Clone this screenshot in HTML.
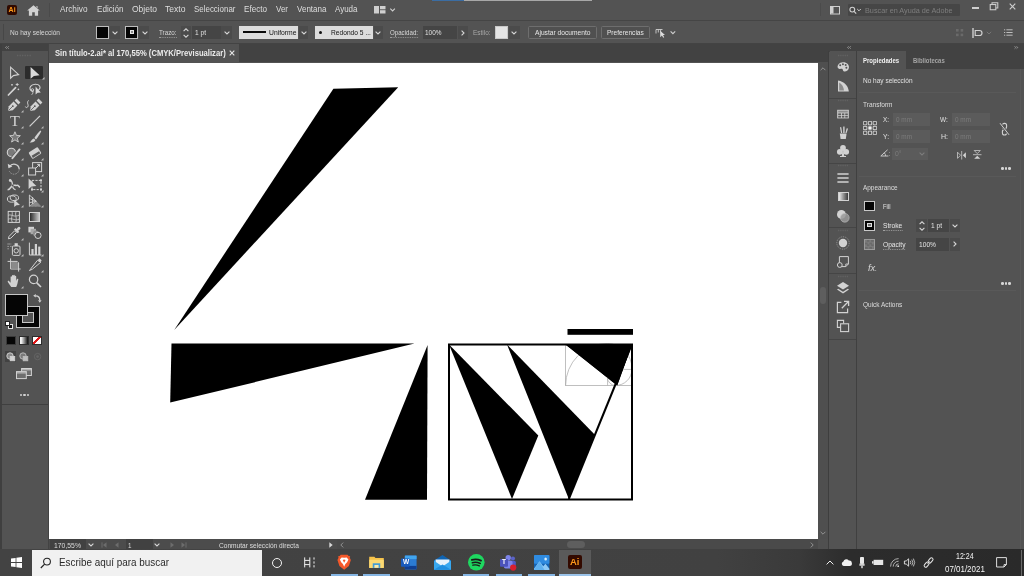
<!DOCTYPE html>
<html lang="es">
<head>
<meta charset="utf-8">
<title>Adobe Illustrator</title>
<style>
*{margin:0;padding:0;box-sizing:border-box}
html,body{width:1024px;height:576px;overflow:hidden;background:#535353}
body{position:relative;font-family:"Liberation Sans",sans-serif;font-size:8px;color:#dcdcdc;line-height:1}
.a{position:absolute}
.t{position:absolute;white-space:nowrap;transform-origin:0 50%}
svg{position:absolute;overflow:visible}
#root{position:absolute;left:0;top:0;width:1024px;height:576px;will-change:transform}
/* backgrounds */
#menubar{left:0;top:0;width:1024px;height:20px;background:#535353}
#ctrlbar{left:0;top:21px;width:1024px;height:22px;background:#535353}
#sep1{left:0;top:20px;width:1024px;height:1px;background:#454545}
#sep2{left:0;top:43px;width:1024px;height:1px;background:#434343}
#tabbar{left:49px;top:44px;width:781px;height:18px;background:#424242}
#doctab{left:49px;top:44px;width:190px;height:18px;background:#535353}
#tbhead{left:0;top:44px;width:48px;height:7px;background:#424242}
#toolbar{left:0;top:51px;width:48px;height:498px;background:#535353}
#tbedge{left:48px;top:44px;width:1px;height:505px;background:#434343}
#canvas{left:49px;top:62.6px;width:769px;height:476.4px;background:#fff}
#vscroll{left:818px;top:62px;width:9.6px;height:477px;background:#4f4f4f}
#status{left:49px;top:539px;width:779px;height:10px;background:#4c4c4c}
#rgap{left:827.6px;top:51px;width:1.8px;height:498px;background:#3e3e3e}
#rhead{left:829px;top:44px;width:195px;height:7px;background:#424242}
#istrip{left:829.4px;top:51.5px;width:26.3px;height:498px;background:#535353}
#rgap2{left:855.7px;top:51px;width:1.5px;height:498px;background:#404040}
#ptabs{left:857px;top:51px;width:167px;height:18px;background:#424242}
#ptab{left:857px;top:51px;width:49px;height:18px;background:#535353}
#panel{left:857px;top:69px;width:167px;height:480px;background:#535353}
#taskbar{left:0;top:549px;width:1024px;height:27px;background:linear-gradient(90deg,#434343 0,#414141 70%,#3a3a3a 78%,#2c2c2c 83%,#2a2a2a 100%)}
</style>
</head>
<body><div id="root">
<div class="a" id="menubar"></div>
<div class="a" id="sep1"></div>
<div class="a" id="ctrlbar"></div>
<div class="a" id="sep2"></div>
<div class="a" id="tabbar"></div>
<div class="a" id="doctab"></div>
<div class="a" id="tbhead"></div>
<div class="a" id="toolbar"></div>
<div class="a" id="tbedge"></div>
<div class="a" id="canvas"></div>
<div class="a" id="vscroll"></div>
<div class="a" id="status"></div>
<div class="a" id="rgap"></div>
<div class="a" id="rhead"></div>
<div class="a" id="istrip"></div>
<div class="a" id="rgap2"></div>
<div class="a" id="ptabs"></div>
<div class="a" id="ptab"></div>
<div class="a" id="panel"></div>

<!-- ARTWORK -->
<svg id="art" class="a" style="left:0;top:0" width="1024" height="576" viewBox="0 0 1024 576">
<g fill="#000">
<polygon points="333.4,88.7 398.2,87.2 174.2,329.9"/>
<polygon points="171.5,343.6 414.5,343.6 170.2,402.6"/>
<polygon points="427.6,345 427,499.8 365,499.8"/>
<rect x="567.5" y="329" width="65.5" height="5.8"/>
<polygon points="449,344.5 538.3,435.5 512,499"/>
<polygon points="507,344.5 594.6,434.6 568.8,499"/>
<polygon points="565.5,344.5 632,344.5 617.2,385.6"/>
</g>
<g fill="none" stroke="#ababab" stroke-width="0.75">
<rect x="565.6" y="344.5" width="66.4" height="41"/>
<line x1="607.6" y1="344.5" x2="607.6" y2="385.5"/>
<line x1="607.6" y1="369.4" x2="632" y2="369.4"/>
<path d="M565.6,385.5 A42,42 0 0 1 607.6,343.5 A25,25 0 0 1 632,369 A16.5,16.5 0 0 1 615.5,385.5 A8.2,8.2 0 0 1 607.4,377.3"/>
</g>
<rect x="449" y="344.5" width="183" height="155" fill="none" stroke="#000" stroke-width="2"/>
<line x1="568.8" y1="499" x2="631.5" y2="345" stroke="#000" stroke-width="2"/>
<g fill="#000">
<polygon points="565.5,344.5 632,344.5 617.2,385.6"/>
</g>
</svg>

<div class="a" style="left:432px;top:0px;width:31.5px;height:1px;background:#3b6da3;"></div>
<div class="a" style="left:463.5px;top:0px;width:128.5px;height:1px;background:#a8a8a8;"></div>
<div class="a" style="left:7px;top:5px;width:10px;height:10px;background:#300a00;border-radius:2px"></div>
<span class="t" style="left:8.60px;top:6.49px;font-size:7px;color:#ff9a1a;transform:scaleX(1.0000);font-weight:bold;">Ai</span>
<svg style="left:27px;top:5px" width="13" height="11" viewBox="0 0 13 11"><path d="M6.5,0.3 L0.2,5.6 H1.9 V10.8 H5.2 V7.2 H7.8 V10.8 H11.1 V5.6 H12.8 Z M9.3,1.2 h1.3 v2 l-1.3,-1.1z" fill="#d2d2d2"/></svg>
<div class="a" style="left:48.5px;top:3px;width:1px;height:14px;background:#4a4a4a;"></div>
<span class="t" style="left:60.00px;top:5.13px;font-size:9px;color:#dedede;transform:scaleX(0.9164);">Archivo</span>
<span class="t" style="left:96.50px;top:5.13px;font-size:9px;color:#dedede;transform:scaleX(0.8978);">Edición</span>
<span class="t" style="left:131.50px;top:5.13px;font-size:9px;color:#dedede;transform:scaleX(0.9428);">Objeto</span>
<span class="t" style="left:164.50px;top:5.13px;font-size:9px;color:#dedede;transform:scaleX(0.9530);">Texto</span>
<span class="t" style="left:193.50px;top:5.13px;font-size:9px;color:#dedede;transform:scaleX(0.8825);">Seleccionar</span>
<span class="t" style="left:243.50px;top:5.13px;font-size:9px;color:#dedede;transform:scaleX(0.9014);">Efecto</span>
<span class="t" style="left:275.50px;top:5.13px;font-size:9px;color:#dedede;transform:scaleX(0.8883);">Ver</span>
<span class="t" style="left:296.50px;top:5.13px;font-size:9px;color:#dedede;transform:scaleX(0.8930);">Ventana</span>
<span class="t" style="left:334.50px;top:5.13px;font-size:9px;color:#dedede;transform:scaleX(0.8873);">Ayuda</span>
<svg style="left:374px;top:6px" width="24" height="8" viewBox="0 0 24 8"><g fill="#cfcfcf"><rect x="0" y="0" width="5" height="7.5"/><rect x="6" y="0" width="5.5" height="3.3"/><rect x="6" y="4.2" width="5.5" height="3.3"/></g><path d="M16.3,2.6 l2.3,2.3 l2.3,-2.3" fill="none" stroke="#cfcfcf" stroke-width="1.1"/></svg>
<svg style="left:830px;top:6px" width="10" height="9" viewBox="0 0 10 9"><rect x="0.5" y="0.5" width="9" height="7.5" fill="none" stroke="#cfcfcf" stroke-width="1"/><rect x="1" y="1" width="2.5" height="6.5" fill="#cfcfcf"/></svg>
<div class="a" style="left:847.5px;top:4px;width:112px;height:12px;background:#464646;border-radius:1px"></div>
<svg style="left:849px;top:6px" width="14" height="9" viewBox="0 0 14 9"><circle cx="3.3" cy="3.6" r="2.4" fill="none" stroke="#d0d0d0" stroke-width="1.1"/><path d="M5.1,5.4 L7.2,7.6" stroke="#d0d0d0" stroke-width="1.2"/><path d="M8.2,3 l1.8,1.8 l1.8,-1.8" fill="none" stroke="#d0d0d0" stroke-width="1"/></svg>
<span class="t" style="left:864.50px;top:6.62px;font-size:7.5px;color:#7e7e7e;transform:scaleX(0.9685);">Buscar en Ayuda de Adobe</span>
<div class="a" style="left:820px;top:3px;width:1px;height:13px;background:#4b4b4b;"></div>
<div class="a" style="left:972px;top:7.2px;width:7.4px;height:1.6px;background:#cfcfcf;"></div>
<svg style="left:989.2px;top:2.2px" width="10" height="9" viewBox="0 0 10 10"><path d="M2.8,2.6 V0.8 H9.2 V6.6 H7.2" fill="none" stroke="#cdcdcd" stroke-width="1.2"/><rect x="0.8" y="2.8" width="6.2" height="5.8" fill="none" stroke="#cdcdcd" stroke-width="1.2"/></svg>
<svg style="left:1009px;top:3px" width="7" height="7" viewBox="0 0 8 8"><path d="M0.8,0.8 L7.2,7.2 M7.2,0.8 L0.8,7.2" stroke="#cdcdcd" stroke-width="1.3"/></svg>

<div class="a" style="left:3px;top:24px;width:1px;height:16px;background:#474747;"></div>
<span class="t" style="left:10.00px;top:29.29px;font-size:7px;color:#d8d8d8;transform:scaleX(0.9380);">No hay selección</span>
<div class="a" style="left:96px;top:26px;width:13px;height:12.5px;background:#050505;border:1px solid #bdbdbd"></div>
<div class="a" style="left:110px;top:26px;width:10px;height:12.5px;background:#4b4b4b;"></div>
<svg style="left:112px;top:30.5px" width="6" height="4" viewBox="0 0 6 4"><path d="M0.6,0.6 L3,3 L5.4,0.6" fill="none" stroke="#d6d6d6" stroke-width="1.1"/></svg>
<div class="a" style="left:125px;top:26px;width:13px;height:12.5px;background:#050505;border:1px solid #bdbdbd"></div>
<div class="a" style="left:129.5px;top:30.2px;width:4px;height:4px;background:#8a8a8a;border:1px solid #e8e8e8"></div>
<div class="a" style="left:139px;top:26px;width:10px;height:12.5px;background:#4b4b4b;"></div>
<svg style="left:141.5px;top:30.5px" width="6" height="4" viewBox="0 0 6 4"><path d="M0.6,0.6 L3,3 L5.4,0.6" fill="none" stroke="#d6d6d6" stroke-width="1.1"/></svg>
<span class="t" style="left:158.50px;top:29.29px;font-size:7px;color:#d8d8d8;transform:scaleX(0.8939);border-bottom:1px dotted #9a9a9a;padding-bottom:0.5px;">Trazo:</span>
<div class="a" style="left:181px;top:26px;width:10px;height:12.5px;background:#4b4b4b;"></div>
<svg style="left:183px;top:27.5px" width="6" height="10" viewBox="0 0 6 10"><path d="M0.6,3.2 L3,0.8 L5.4,3.2 M0.6,6.8 L3,9.2 L5.4,6.8" fill="none" stroke="#d6d6d6" stroke-width="1.1"/></svg>
<div class="a" style="left:192px;top:26px;width:28.5px;height:12.5px;background:#454545;"></div>
<span class="t" style="left:195.00px;top:29.29px;font-size:7px;color:#e0e0e0;transform:scaleX(0.9422);">1 pt</span>
<div class="a" style="left:221px;top:26px;width:11px;height:12.5px;background:#4b4b4b;"></div>
<svg style="left:224px;top:30.5px" width="6" height="4" viewBox="0 0 6 4"><path d="M0.6,0.6 L3,3 L5.4,0.6" fill="none" stroke="#d6d6d6" stroke-width="1.1"/></svg>
<div class="a" style="left:238.5px;top:26px;width:59.5px;height:12.5px;background:#dcdcdc;"></div>
<div class="a" style="left:242.5px;top:31.3px;width:23px;height:2px;background:#0a0a0a;"></div>
<span class="t" style="left:268.50px;top:29.08px;font-size:7.4px;color:#111;transform:scaleX(0.9161);">Uniforme</span>
<div class="a" style="left:299px;top:26px;width:9px;height:12.5px;background:#4b4b4b;"></div>
<svg style="left:300.5px;top:30.5px" width="6" height="4" viewBox="0 0 6 4"><path d="M0.6,0.6 L3,3 L5.4,0.6" fill="none" stroke="#d6d6d6" stroke-width="1.1"/></svg>
<div class="a" style="left:314.5px;top:26px;width:58px;height:12.5px;background:#dcdcdc;"></div>
<div class="a" style="left:319px;top:31px;width:3px;height:3px;border-radius:50%;background:#111"></div>
<span class="t" style="left:331.00px;top:29.08px;font-size:7.4px;color:#111;transform:scaleX(0.9002);">Redondo 5 ...</span>
<div class="a" style="left:373.5px;top:26px;width:9px;height:12.5px;background:#4b4b4b;"></div>
<svg style="left:375px;top:30.5px" width="6" height="4" viewBox="0 0 6 4"><path d="M0.6,0.6 L3,3 L5.4,0.6" fill="none" stroke="#d6d6d6" stroke-width="1.1"/></svg>
<span class="t" style="left:390.00px;top:29.29px;font-size:7px;color:#d8d8d8;transform:scaleX(0.8775);border-bottom:1px dotted #9a9a9a;padding-bottom:0.5px;">Opacidad:</span>
<div class="a" style="left:422.5px;top:26px;width:34px;height:12.5px;background:#454545;"></div>
<span class="t" style="left:425.00px;top:29.29px;font-size:7px;color:#e0e0e0;transform:scaleX(0.9216);">100%</span>
<div class="a" style="left:457.5px;top:26px;width:10.5px;height:12.5px;background:#4b4b4b;"></div>
<svg style="left:460.6px;top:29.5px" width="4" height="6" viewBox="0 0 4 6"><path d="M0.6,0.6 L3,3 L0.6,5.4" fill="none" stroke="#d6d6d6" stroke-width="1.1"/></svg>
<span class="t" style="left:472.50px;top:29.29px;font-size:7px;color:#a8a8a8;transform:scaleX(0.9181);">Estilo:</span>
<div class="a" style="left:495px;top:26px;width:12.5px;height:12.5px;background:#e4e4e4;border:1px solid #c8c8c8"></div>
<div class="a" style="left:508.5px;top:26px;width:11px;height:12.5px;background:#4b4b4b;"></div>
<svg style="left:511px;top:30.5px" width="6" height="4" viewBox="0 0 6 4"><path d="M0.6,0.6 L3,3 L5.4,0.6" fill="none" stroke="#d6d6d6" stroke-width="1.1"/></svg>
<div class="a" style="left:528px;top:26px;width:68.5px;height:12.5px;border:1px solid #6e6e6e;border-radius:1.5px;background:#505050"></div>
<span class="t" style="left:535.00px;top:29.28px;font-size:7.4px;color:#e6e6e6;transform:scaleX(0.8995);">Ajustar documento</span>
<div class="a" style="left:600.8px;top:26px;width:49.5px;height:12.5px;border:1px solid #6e6e6e;border-radius:1.5px;background:#505050"></div>
<span class="t" style="left:607.00px;top:29.28px;font-size:7.4px;color:#e6e6e6;transform:scaleX(0.8858);">Preferencias</span>
<svg style="left:655px;top:27px" width="22" height="11" viewBox="0 0 22 11"><g fill="none" stroke="#cfcfcf" stroke-width="0.9"><path d="M1,2.5 H7.5 M1,2.5 V6.5 M3.3,2.5 V5.5 M5.6,2.5 V5.5"/></g><path d="M5.2,3.8 L5.2,10.2 L6.9,8.6 L8.2,10.8 L9.2,10.2 L8,8.1 L10,7.9 Z" fill="#dcdcdc"/><path d="M15.6,4.3 l2.3,2.3 l2.3,-2.3" fill="none" stroke="#cfcfcf" stroke-width="1.1"/></svg>
<svg style="left:956px;top:28.5px" width="8" height="8" viewBox="0 0 8 8"><g fill="#6a6a6a"><rect x="0" y="0" width="2.6" height="2.6"/><rect x="4.6" y="0" width="2.6" height="2.6"/><rect x="0" y="4.6" width="2.6" height="2.6"/><rect x="4.6" y="4.6" width="2.6" height="2.6"/></g></svg>
<svg style="left:972px;top:27.5px" width="22" height="10" viewBox="0 0 22 10"><path d="M1,0 V10" stroke="#cfcfcf" stroke-width="1.4"/><path d="M3.2,2.5 H7.5 A2.3,2.3 0 0 1 7.5,7.5 H3.2 Z" fill="none" stroke="#cfcfcf" stroke-width="1.2"/><path d="M14.8,3.8 l2.2,2.2 l2.2,-2.2" fill="none" stroke="#767676" stroke-width="1"/></svg>
<svg style="left:1004px;top:29px" width="9" height="7" viewBox="0 0 9 7"><path d="M0,0.8 H1.2 M2.4,0.8 H8.6 M0,3.5 H1.2 M2.4,3.5 H8.6 M0,6.2 H1.2 M2.4,6.2 H8.6" stroke="#bdbdbd" stroke-width="1"/></svg>

<span class="t" style="left:55.40px;top:49.04px;font-size:8.6px;color:#ececec;transform:scaleX(0.8890);font-weight:bold;">Sin título-2.ai* al 170,55% (CMYK/Previsualizar)</span>
<svg style="left:229px;top:49.5px" width="6" height="6" viewBox="0 0 6 6"><path d="M0.7,0.7 L5.3,5.3 M5.3,0.7 L0.7,5.3" stroke="#e6e6e6" stroke-width="1.1"/></svg>
<svg style="left:4.6px;top:46px" width="4.5" height="3" viewBox="0 0 6 4"><path d="M2.4,0.4 L0.8,2 L2.4,3.6 M5,0.4 L3.4,2 L5,3.6" fill="none" stroke="#c8c8c8" stroke-width="0.8"/></svg>
<svg style="left:846.8px;top:46px" width="4.5" height="3" viewBox="0 0 6 4"><path d="M2.4,0.4 L0.8,2 L2.4,3.6 M5,0.4 L3.4,2 L5,3.6" fill="none" stroke="#c8c8c8" stroke-width="0.8"/></svg>
<svg style="left:1013.8px;top:46px" width="4.5" height="3" viewBox="0 0 6 4"><path d="M0.8,0.4 L2.4,2 L0.8,3.6 M3.4,0.4 L5,2 L3.4,3.6" fill="none" stroke="#c8c8c8" stroke-width="0.8"/></svg>

<div class="a" style="left:0px;top:44px;width:1.5px;height:505px;background:#3f3f3f;"></div>
<svg style="left:17px;top:54px" width="14" height="3" viewBox="0 0 14 3"><path d="M0,1.5 H14" stroke="#626262" stroke-width="1.4" stroke-dasharray="1.4 1.1"/></svg>
<div class="a" style="left:25px;top:66px;width:18px;height:13.4px;background:#2c2c2c;border-radius:1px;"></div>
<svg style="left:6.4px;top:65.0px" width="16" height="16" viewBox="0 0 16 16"><path d="M4.6,2.2 L4.6,13.2 L7.4,10.6 L12.6,9.6 Z" fill="none" stroke="#d2d2d2" stroke-width="1.1" stroke-linejoin="miter"/></svg>
<svg style="left:26.7px;top:65.0px" width="16" height="16" viewBox="0 0 16 16"><path d="M3.6,2 L3.6,13.8 L6.9,10.9 L12.6,10.2 Z" fill="#dadada"/></svg>
<svg style="left:41.9px;top:77.1px" width="2.5" height="2.5" viewBox="0 0 3 3"><path d="M3,0 V3 H0Z" fill="#bcbcbc"/></svg>
<svg style="left:6.4px;top:81.0px" width="16" height="16" viewBox="0 0 16 16"><path d="M2.4,14 L9.6,6.6" stroke="#d2d2d2" stroke-width="1.7" stroke-linecap="round"/><path d="M11.2,2 V5 M9.7,3.5 H12.7 M6,3 V4.6 M5.2,3.8 H6.8 M12.4,7.6 V9.2 M11.6,8.4 H13.2" stroke="#d2d2d2" stroke-width="0.9"/></svg>
<svg style="left:26.7px;top:81.0px" width="16" height="16" viewBox="0 0 16 16"><path d="M6.4,10.4 C3,10 2.2,7.4 3.6,5.4 C5.4,2.8 11,2.6 12.6,5 C13.6,6.6 12.8,8.2 11.4,9" fill="none" stroke="#d2d2d2" stroke-width="1.1"/><circle cx="5.4" cy="9" r="1.3" fill="none" stroke="#d2d2d2" stroke-width="0.9"/><path d="M5.6,10.2 C6.4,11.6 5.6,13 4.6,13.8" fill="none" stroke="#d2d2d2" stroke-width="0.9"/><path d="M8.6,5.6 L8.6,13.6 L10.6,11.8 L13.8,11.6 Z" fill="#dadada"/></svg>
<svg style="left:6.4px;top:97.2px" width="16" height="16" viewBox="0 0 16 16"><path d="M2,14 L2.8,9.2 L7.6,4.6 L11.4,8.4 L6.8,13.2 Z" fill="#d2d2d2"/><path d="M8.6,3.6 L10.6,1.6 L14.4,5.4 L12.4,7.4 Z" fill="#d2d2d2"/><path d="M2.4,13.6 L6.4,9.6" stroke="#535353" stroke-width="0.8"/><circle cx="6.8" cy="9.2" r="0.9" fill="#535353"/></svg>
<svg style="left:20.6px;top:109.8px" width="2.5" height="2.5" viewBox="0 0 3 3"><path d="M3,0 V3 H0Z" fill="#bcbcbc"/></svg>
<svg style="left:28.3px;top:97.2px" width="16" height="16" viewBox="0 0 16 16"><path d="M2,14 L2.8,9.2 L7.6,4.6 L11.4,8.4 L6.8,13.2 Z" fill="#d2d2d2"/><path d="M8.6,3.6 L10.6,1.6 L14.4,5.4 L12.4,7.4 Z" fill="#d2d2d2"/><path d="M2.4,13.6 L6.4,9.6" stroke="#535353" stroke-width="0.8"/><circle cx="6.8" cy="9.2" r="0.9" fill="#535353"/></svg>
<svg style="left:22.2px;top:97.2px" width="16" height="16" viewBox="0 0 16 16"><path d="M6.6,3.4 C4,6 7.4,8 5.6,10 C4.8,11 3.6,10.6 3.4,9.6" fill="none" stroke="#d2d2d2" stroke-width="1"/></svg>
<span class="t" style="left:9.60px;top:113.80px;font-size:15px;color:#d2d2d2;transform:scaleX(1.0696);font-family:'Liberation Serif',serif;">T</span>
<svg style="left:20.6px;top:125.6px" width="2.5" height="2.5" viewBox="0 0 3 3"><path d="M3,0 V3 H0Z" fill="#bcbcbc"/></svg>
<svg style="left:26.7px;top:113.0px" width="16" height="16" viewBox="0 0 16 16"><path d="M2.6,13.4 L13,2.8" stroke="#d2d2d2" stroke-width="1.2"/></svg>
<svg style="left:40.9px;top:125.6px" width="2.5" height="2.5" viewBox="0 0 3 3"><path d="M3,0 V3 H0Z" fill="#bcbcbc"/></svg>
<svg style="left:6.6px;top:129.0px" width="16" height="16" viewBox="0 0 16 16"><path transform="translate(1,1.2) scale(0.87)" d="M8,1.8 L9.7,6 L14.2,6.3 L10.7,9.2 L11.9,13.6 L8,11.1 L4.1,13.6 L5.3,9.2 L1.8,6.3 L6.3,6 Z" fill="#7a7a7a" stroke="#d2d2d2" stroke-width="1"/></svg>
<svg style="left:20.6px;top:141.6px" width="2.5" height="2.5" viewBox="0 0 3 3"><path d="M3,0 V3 H0Z" fill="#bcbcbc"/></svg>
<svg style="left:26.7px;top:129.0px" width="16" height="16" viewBox="0 0 16 16"><path d="M13.6,1.6 C12,2.6 8.6,7 7.4,9 L9,10.4 C10.6,8.6 13.6,4 14.2,2.2 Z" fill="#d2d2d2"/><path d="M6.8,9.6 L8.4,11 C7.8,13 5.4,13.8 2.6,13.4 C4.4,12.6 4.6,10 6.8,9.6Z" fill="#d2d2d2"/></svg>
<svg style="left:40.9px;top:141.6px" width="2.5" height="2.5" viewBox="0 0 3 3"><path d="M3,0 V3 H0Z" fill="#bcbcbc"/></svg>
<svg style="left:5.4px;top:145.0px" width="16" height="16" viewBox="0 0 16 16"><circle cx="6.4" cy="7.4" r="4.1" fill="#7a7a7a" stroke="#d2d2d2" stroke-width="1.1"/><path d="M7.4,13.2 L14.6,4.4" stroke="#535353" stroke-width="3.4"/><path d="M7.4,13.2 L14.6,4.4" stroke="#d2d2d2" stroke-width="1.9" stroke-linecap="round"/></svg>
<svg style="left:20.6px;top:157.6px" width="2.5" height="2.5" viewBox="0 0 3 3"><path d="M3,0 V3 H0Z" fill="#bcbcbc"/></svg>
<svg style="left:26.7px;top:145.0px" width="16" height="16" viewBox="0 0 16 16"><g transform="rotate(-32 8 8)"><rect x="2.6" y="4.2" width="10.8" height="7.6" rx="1.2" fill="#d2d2d2"/><rect x="3.6" y="8.6" width="8.8" height="2.4" fill="#5a5a5a"/></g></svg>
<svg style="left:40.9px;top:157.6px" width="2.5" height="2.5" viewBox="0 0 3 3"><path d="M3,0 V3 H0Z" fill="#bcbcbc"/></svg>
<svg style="left:6.4px;top:161.4px" width="16" height="16" viewBox="0 0 16 16"><path d="M3.6,5.6 A5.2,5.2 0 0 1 13.2,8" fill="none" stroke="#d2d2d2" stroke-width="1.2"/><path d="M13.2,8 A5.2,5.2 0 0 1 3.2,10" fill="none" stroke="#9a9a9a" stroke-width="1" stroke-dasharray="1.5 1.1"/><path d="M1.8,2.8 L2.4,7.2 L6.4,5.6 Z" fill="#d2d2d2"/></svg>
<svg style="left:20.6px;top:174.0px" width="2.5" height="2.5" viewBox="0 0 3 3"><path d="M3,0 V3 H0Z" fill="#bcbcbc"/></svg>
<svg style="left:26.7px;top:161.4px" width="16" height="16" viewBox="0 0 16 16"><rect x="5.6" y="1.6" width="9" height="9" fill="none" stroke="#d2d2d2" stroke-width="1"/><rect x="1.6" y="7" width="7" height="7" fill="#535353" stroke="#d2d2d2" stroke-width="1"/><path d="M9,7 L12.6,3.4 M10.2,3.4 H12.6 V5.8" fill="none" stroke="#d2d2d2" stroke-width="1"/></svg>
<svg style="left:40.9px;top:174.0px" width="2.5" height="2.5" viewBox="0 0 3 3"><path d="M3,0 V3 H0Z" fill="#bcbcbc"/></svg>
<svg style="left:6.4px;top:177.0px" width="16" height="16" viewBox="0 0 16 16"><path d="M1.6,12.8 C4,12.6 4.6,10 6.4,8.6 C8,7.4 9.4,8.8 10.8,8.4 C12.4,7.8 12.6,9.6 14,10.2" fill="none" stroke="#d2d2d2" stroke-width="1.5"/><path d="M3.2,3.6 C5.6,3 6.6,5.4 6.4,8.4 M6.6,8.6 C6.4,10.8 8,12.6 9.6,12.6" fill="none" stroke="#d2d2d2" stroke-width="1.3"/><circle cx="4.2" cy="3.4" r="1.3" fill="#d2d2d2"/><circle cx="6.6" cy="8.6" r="1" fill="#535353"/></svg>
<svg style="left:20.6px;top:189.6px" width="2.5" height="2.5" viewBox="0 0 3 3"><path d="M3,0 V3 H0Z" fill="#bcbcbc"/></svg>
<svg style="left:26.7px;top:177.0px" width="16" height="16" viewBox="0 0 16 16"><rect x="5" y="3.4" width="9" height="9.2" fill="none" stroke="#d2d2d2" stroke-width="1" stroke-dasharray="2.2 1.2"/><path d="M1.6,1.4 L1.6,12 L4.6,9.4 L9.4,9 Z" fill="#d2d2d2"/><rect x="13" y="2.4" width="2" height="2" fill="#d2d2d2"/><rect x="13" y="11.6" width="2" height="2" fill="#d2d2d2"/><rect x="4" y="11.6" width="2" height="2" fill="#d2d2d2"/></svg>
<svg style="left:40.9px;top:189.6px" width="2.5" height="2.5" viewBox="0 0 3 3"><path d="M3,0 V3 H0Z" fill="#bcbcbc"/></svg>
<svg style="left:6.4px;top:192.8px" width="16" height="16" viewBox="0 0 16 16"><ellipse cx="5.8" cy="6" rx="4.4" ry="3.2" fill="none" stroke="#d2d2d2" stroke-width="1"/><ellipse cx="8.4" cy="4.8" rx="4.2" ry="2.8" fill="none" stroke="#d2d2d2" stroke-width="1"/><path d="M8.2,6.4 L8.2,14 L10.4,12.2 L14,12 Z" fill="#d2d2d2"/></svg>
<svg style="left:20.6px;top:205.4px" width="2.5" height="2.5" viewBox="0 0 3 3"><path d="M3,0 V3 H0Z" fill="#bcbcbc"/></svg>
<svg style="left:26.7px;top:192.8px" width="16" height="16" viewBox="0 0 16 16"><path d="M2.4,2 V13.4 L9.4,8.4 Z M2.4,5.6 L9.4,8.4 M2.4,9.6 L9.4,8.4 M5.6,4 V11" fill="none" stroke="#d2d2d2" stroke-width="0.9"/><path d="M2.4,13.4 H14 L9.4,8.4" fill="#8a8a8a" stroke="#9a9a9a" stroke-width="0.6" stroke-dasharray="0.8 0.6"/></svg>
<svg style="left:40.9px;top:205.4px" width="2.5" height="2.5" viewBox="0 0 3 3"><path d="M3,0 V3 H0Z" fill="#bcbcbc"/></svg>
<svg style="left:6.4px;top:209.0px" width="16" height="16" viewBox="0 0 16 16"><rect x="2.2" y="2.4" width="11.2" height="11" fill="none" stroke="#d2d2d2" stroke-width="1"/><path d="M2.2,6.4 C5,4.6 8,9 13.4,6 M2.2,10.2 C6,8.6 9,12.4 13.4,10 M5.8,2.4 C7.6,5.6 4,9 6.4,13.4 M10,2.4 C8.4,6 11.6,9.6 9.8,13.4" fill="none" stroke="#d2d2d2" stroke-width="0.8"/></svg>
<div class="a" style="left:29.1px;top:211.8px;width:11.4px;height:10.6px;border:1px solid #d2d2d2;background:linear-gradient(90deg,#2a2a2a,#c8c8c8)"></div>
<svg style="left:6.4px;top:225.0px" width="16" height="16" viewBox="0 0 16 16"><path d="M2.4,13.8 L3,11.4 L8.6,5.8 L10.4,7.6 L4.8,13.2 Z" fill="none" stroke="#d2d2d2" stroke-width="1"/><path d="M8,4.4 L9.4,3 L10.4,4 L12,2.2 A1.3,1.3 0 0 1 14,4.2 L12.2,5.8 L13.2,6.8 L11.8,8.2 Z" fill="#d2d2d2"/></svg>
<svg style="left:20.6px;top:237.6px" width="2.5" height="2.5" viewBox="0 0 3 3"><path d="M3,0 V3 H0Z" fill="#bcbcbc"/></svg>
<svg style="left:26.7px;top:225.0px" width="16" height="16" viewBox="0 0 16 16"><rect x="1.4" y="1.8" width="5.6" height="5.6" fill="#d2d2d2"/><rect x="3.6" y="3.8" width="5.4" height="5.4" fill="#a8a8a8"/><circle cx="9" cy="8.6" r="3" fill="#8e8e8e"/><circle cx="11" cy="10.4" r="3.1" fill="#535353" stroke="#d2d2d2" stroke-width="1"/></svg>
<svg style="left:6.4px;top:241.0px" width="16" height="16" viewBox="0 0 16 16"><rect x="6.4" y="5" width="7.6" height="9.4" rx="1" fill="none" stroke="#d2d2d2" stroke-width="1"/><rect x="8.6" y="2.2" width="3.2" height="2.8" fill="#d2d2d2"/><circle cx="10.2" cy="9.8" r="2.2" fill="none" stroke="#d2d2d2" stroke-width="1"/><path d="M1.6,3 H5.4 M1.6,5.4 H3.2 M4.4,5.4 H5.4 M1.6,7.8 H2.6" stroke="#d2d2d2" stroke-width="0.9" stroke-dasharray="1 0.8"/></svg>
<svg style="left:20.6px;top:253.6px" width="2.5" height="2.5" viewBox="0 0 3 3"><path d="M3,0 V3 H0Z" fill="#bcbcbc"/></svg>
<svg style="left:26.7px;top:241.0px" width="16" height="16" viewBox="0 0 16 16"><path d="M2.4,1.6 V14 H14.4" fill="none" stroke="#d2d2d2" stroke-width="1"/><rect x="4.4" y="8" width="2.2" height="6" fill="#d2d2d2"/><rect x="7.8" y="3" width="2.2" height="11" fill="#d2d2d2"/><rect x="11.2" y="5.6" width="2.2" height="8.4" fill="#d2d2d2"/></svg>
<svg style="left:40.9px;top:253.6px" width="2.5" height="2.5" viewBox="0 0 3 3"><path d="M3,0 V3 H0Z" fill="#bcbcbc"/></svg>
<svg style="left:6.4px;top:257.0px" width="16" height="16" viewBox="0 0 16 16"><path d="M4.6,1.4 V12 H14.6 M1.6,4.4 H11.2 L12.6,5.8 V14.6" fill="none" stroke="#d2d2d2" stroke-width="1"/><path d="M5.2,5 H11 L12,6 V11.4 H5.2Z" fill="#8a8a8a"/></svg>
<svg style="left:26.7px;top:257.0px" width="16" height="16" viewBox="0 0 16 16"><path d="M2.4,13.6 L10.4,3.4 L13.8,5.2 L5.4,12.2 Z" fill="none" stroke="#d2d2d2" stroke-width="1"/><path d="M10.6,3.2 L12.4,1.2 L14.6,3.2 L13.8,5 Z" fill="#d2d2d2"/></svg>
<svg style="left:40.9px;top:269.6px" width="2.5" height="2.5" viewBox="0 0 3 3"><path d="M3,0 V3 H0Z" fill="#bcbcbc"/></svg>
<svg style="left:6.4px;top:273.0px" width="16" height="16" viewBox="0 0 16 16"><path d="M5.2,14 C4.2,12.4 2.8,10.6 1.8,9 C1.4,8.2 2.4,7.4 3.2,8.2 L4.6,9.8 V4 C4.6,3 6,3 6,4 V7.4 V2.8 C6,1.8 7.4,1.8 7.4,2.8 V7.4 V2.4 C7.4,1.4 8.8,1.4 8.8,2.4 V7.6 V3.4 C8.800,2.4 10.2,2.4 10.2,3.4 V8 L10.8,6.4 C11.2,5.4 12.6,5.8 12.2,7 C11.800,8.800 11.4,12 10.2,14 Z" fill="#d2d2d2"/></svg>
<svg style="left:20.6px;top:285.6px" width="2.5" height="2.5" viewBox="0 0 3 3"><path d="M3,0 V3 H0Z" fill="#bcbcbc"/></svg>
<svg style="left:26.7px;top:273.0px" width="16" height="16" viewBox="0 0 16 16"><circle cx="6.6" cy="6.4" r="4.2" fill="none" stroke="#d2d2d2" stroke-width="1.2"/><path d="M9.6,9.600 L14,14" stroke="#d2d2d2" stroke-width="1.6"/></svg>
<div class="a" style="left:16.4px;top:306px;width:23.4px;height:22.4px;background:#050505;border:1px solid #c6c6c6"></div>
<div class="a" style="left:22px;top:312px;width:12px;height:11.4px;background:#535353;border:1px solid #c6c6c6"></div>
<div class="a" style="left:5.1px;top:293.9px;width:22.7px;height:22.6px;background:#050505;border:1px solid #c6c6c6"></div>
<svg style="left:33px;top:294px" width="9" height="9" viewBox="0 0 9 9"><path d="M2.600,1.800 C5.4,1.800 6.800,3.400 6.800,6.2" fill="none" stroke="#d2d2d2" stroke-width="1.3"/><path d="M0.2,1.800 L2.800,0 V3.600Z M6.800,8.800 L5,6.200 H8.600Z" fill="#d2d2d2"/></svg>
<div class="a" style="left:7.600px;top:323.8px;width:5px;height:5px;background:#111;border:0.8px solid #e4e4e4"></div>
<div class="a" style="left:5px;top:321.2px;width:5px;height:5px;background:#fff;border:0.8px solid #222"></div>
<div class="a" style="left:5.5px;top:335.6px;width:10.2px;height:9.6px;background:#060606;border:1px solid #3a3a3a"></div>
<div class="a" style="left:19px;top:335.6px;width:9.6px;height:9.6px;border:1px solid #2c2c2c;background:linear-gradient(90deg,#f4f4f4 15%,#1a1a1a 95%)"></div>
<div class="a" style="left:32.3px;top:335.6px;width:9.6px;height:9.6px;border:1px solid #2c2c2c;background:linear-gradient(135deg,#fff 0,#fff 40%,#e01818 40%,#e01818 60%,#fff 60%)"></div>
<div class="a" style="left:5.2px;top:351.4px;width:11px;height:10.6px;background:#424242;"></div>
<svg style="left:6px;top:352.4px" width="10" height="10" viewBox="0 0 10 10"><circle cx="4" cy="4" r="3.2" fill="#8a8a8a" stroke="#d2d2d2" stroke-width="0.9"/><rect x="4.2" y="4.400" width="4.6" height="4.400" fill="#d2d2d2" stroke="#d2d2d2" stroke-width="0.8"/></svg>
<svg style="left:19.4px;top:352.4px" width="10" height="10" viewBox="0 0 10 10"><circle cx="4" cy="4" r="3.2" fill="#7a7a7a" stroke="#bdbdbd" stroke-width="0.9"/><rect x="4.2" y="4.400" width="4.6" height="4.400" fill="#bdbdbd" stroke="#bdbdbd" stroke-width="0.8"/></svg>
<svg style="left:32.6px;top:352.4px" width="10" height="10" viewBox="0 0 10 10"><circle cx="4.6" cy="4.6" r="3.2" fill="none" stroke="#656565" stroke-width="0.9"/><circle cx="4.6" cy="4.6" r="1.4" fill="#656565"/></svg>
<svg style="left:16px;top:368px" width="16" height="11" viewBox="0 0 16 11"><rect x="5.6" y="0.5" width="9.8" height="7" fill="#6e6e6e" stroke="#d2d2d2" stroke-width="1"/><path d="M5.6,1.800 H15.4" stroke="#d2d2d2" stroke-width="1"/><rect x="0.5" y="3.600" width="9.800" height="7" fill="#6e6e6e" stroke="#d2d2d2" stroke-width="1"/><path d="M0.5,4.900 H10.3" stroke="#d2d2d2" stroke-width="1"/></svg>
<div class="a" style="left:19.6px;top:393.800px;width:2.4px;height:2.400px;border-radius:50%;background:#d2d2d2"></div>
<div class="a" style="left:23.2px;top:393.800px;width:2.4px;height:2.400px;border-radius:50%;background:#d2d2d2"></div>
<div class="a" style="left:26.8px;top:393.800px;width:2.4px;height:2.400px;border-radius:50%;background:#d2d2d2"></div>
<div class="a" style="left:1.5px;top:404px;width:46.5px;height:1px;background:#3f3f3f;"></div>

<div class="a" style="left:49.5px;top:539px;width:36px;height:10px;background:#414141;"></div>
<span class="t" style="left:54.00px;top:542.28px;font-size:7.2px;color:#dcdcdc;transform:scaleX(0.9498);">170,55%</span>
<svg style="left:87.5px;top:543px" width="6" height="4" viewBox="0 0 6 4"><path d="M0.6,0.6 L3,3 L5.4,0.6" fill="none" stroke="#d6d6d6" stroke-width="1.1"/></svg>
<svg style="left:101px;top:541.5px" width="20" height="6" viewBox="0 0 20 6"><g fill="#6c6c6c"><rect x="0.5" y="0.3" width="1" height="5.4"/><path d="M5.5,0.3 L2,3 L5.5,5.7Z"/><path d="M17.5,0.3 L14,3 L17.5,5.7Z"/></g></svg>
<div class="a" style="left:125.5px;top:539px;width:27px;height:10px;background:#414141;"></div>
<span class="t" style="left:127.50px;top:542.28px;font-size:7.2px;color:#dcdcdc;transform:scaleX(0.8740);">1</span>
<svg style="left:154px;top:543px" width="6" height="4" viewBox="0 0 6 4"><path d="M0.6,0.6 L3,3 L5.4,0.6" fill="none" stroke="#d6d6d6" stroke-width="1.1"/></svg>
<svg style="left:169px;top:541.5px" width="20" height="6" viewBox="0 0 20 6"><g fill="#6c6c6c"><path d="M1.5,0.3 L5,3 L1.5,5.7Z"/><path d="M12.5,0.3 L16,3 L12.5,5.7Z"/><rect x="16.5" y="0.3" width="1" height="5.4"/></g></svg>
<span class="t" style="left:218.50px;top:542.28px;font-size:7.2px;color:#dcdcdc;transform:scaleX(0.9169);">Conmutar selección directa</span>
<svg style="left:329px;top:542px" width="4" height="6" viewBox="0 0 4 6"><path d="M0.3,0.3 L3.7,3 L0.3,5.7Z" fill="#d8d8d8"/></svg>
<div class="a" style="left:337px;top:539px;width:481px;height:10px;background:#4a4a4a;"></div>
<svg style="left:340px;top:542px" width="4" height="6" viewBox="0 0 4 6"><path d="M3.2,0.6 L0.8,3 L3.2,5.4" fill="none" stroke="#9a9a9a" stroke-width="0.9"/></svg>
<div class="a" style="left:567px;top:540.5px;width:18px;height:7px;border-radius:3.5px;background:#5e5e5e"></div>
<svg style="left:810px;top:542px" width="4" height="6" viewBox="0 0 4 6"><path d="M0.8,0.6 L3.2,3 L0.8,5.4" fill="none" stroke="#9a9a9a" stroke-width="0.9"/></svg>
<div class="a" style="left:818px;top:539px;width:9.6px;height:10px;background:#505050;"></div>
<svg style="left:820.2px;top:66.8px" width="6" height="4" viewBox="0 0 6 4"><path d="M0.6,3.2 L3,0.8 L5.4,3.2" fill="none" stroke="#9a9a9a" stroke-width="0.9"/></svg>
<svg style="left:820.2px;top:531px" width="6" height="4" viewBox="0 0 6 4"><path d="M0.6,0.8 L3,3.2 L5.4,0.8" fill="none" stroke="#9a9a9a" stroke-width="0.9"/></svg>
<div class="a" style="left:819.6px;top:286.5px;width:6.6px;height:17.5px;border-radius:3.5px;background:#5e5e5e"></div>

<svg style="left:838px;top:53.5px" width="10" height="3" viewBox="0 0 10 3"><path d="M0,1.5 H10" stroke="#626262" stroke-width="1.4" stroke-dasharray="1.3 0.9"/></svg>
<svg style="left:835.7px;top:59.9px" width="14.6" height="14.6" viewBox="0 0 16 16"><g transform="translate(16,0) scale(-1,1)"><path d="M8.4,2.6 C4.4,2.4 1.6,5 1.8,8.2 C2,11.4 5,13 7.2,12.6 C8.6,12.4 8.2,11 8.8,10.2 C9.6,9.2 11.2,10.2 12.8,9.600 C14.6,8.8 14.8,6.4 13.4,4.800 C12.2,3.400 10.4,2.700 8.400,2.600 Z" fill="#d2d2d2"/><circle cx="4.6" cy="8.6" r="1.1" fill="#535353"/><circle cx="5.4" cy="5.6" r="1.1" fill="#535353"/><circle cx="8.4" cy="4.6" r="1.1" fill="#535353"/><circle cx="11.4" cy="5.800" r="1.1" fill="#535353"/></g></svg>
<svg style="left:835.0px;top:77.8px" width="16" height="16" viewBox="0 0 16 16"><path d="M3,2.400 V13.600 H13.800 C13.400,8 9.600,3.400 3,2.400 Z" fill="#d2d2d2"/><path d="M4.200,4.400 V12.400 H9 C8.6,8.8 7,6 4.200,4.400Z" fill="#8a8a8a"/></svg>
<div class="a" style="left:829.4px;top:97.5px;width:26.3px;height:1px;background:#454545;"></div>
<svg style="left:838px;top:99.3px" width="10" height="3" viewBox="0 0 10 3"><path d="M0,1.5 H10" stroke="#626262" stroke-width="1.4" stroke-dasharray="1.3 0.9"/></svg>
<svg style="left:835.0px;top:105.8px" width="16" height="16" viewBox="0 0 16 16"><rect x="2.2" y="3.8" width="11.6" height="8.6" fill="#d2d2d2"/><g fill="#5c5c5c"><rect x="3.200" y="7.4" width="2.800" height="1.800"/><rect x="6.800" y="7.4" width="2.600" height="1.800"/><rect x="10.200" y="7.4" width="2.600" height="1.800"/><rect x="3.200" y="9.9" width="2.800" height="1.700"/><rect x="6.800" y="9.9" width="2.600" height="1.700"/><rect x="10.200" y="9.9" width="2.600" height="1.700"/></g><rect x="3.200" y="4.6" width="9.600" height="2" fill="#8e8e8e"/></svg>
<svg style="left:835.0px;top:124.5px" width="16" height="16" viewBox="0 0 16 16"><path d="M4.800,8.400 H11.600 L10.800,14 H5.600 Z" fill="#d2d2d2"/><path d="M6,8 L5,2.600 C5.600,1.600 6.400,2 6.400,3 L7.200,8 Z M8.200,8 V2 C8.800,0.800 9.600,1.400 9.600,2.400 V8 Z M10.400,8 L11.600,3.600 C12.400,2.800 13,3.600 12.800,4.400 L11.600,8Z" fill="#d2d2d2"/></svg>
<svg style="left:835.0px;top:142.8px" width="16" height="16" viewBox="0 0 16 16"><circle cx="8" cy="5" r="2.900" fill="#d2d2d2"/><circle cx="4.800" cy="8.800" r="2.900" fill="#d2d2d2"/><circle cx="11.200" cy="8.800" r="2.900" fill="#d2d2d2"/><path d="M7.400,7 H8.600 L9.200,13 H11 V14 H5 V13 H6.800 Z" fill="#d2d2d2"/></svg>
<div class="a" style="left:829.4px;top:162.5px;width:26.3px;height:1px;background:#454545;"></div>
<svg style="left:838px;top:164.3px" width="10" height="3" viewBox="0 0 10 3"><path d="M0,1.5 H10" stroke="#626262" stroke-width="1.4" stroke-dasharray="1.3 0.9"/></svg>
<svg style="left:835.0px;top:170.3px" width="16" height="16" viewBox="0 0 16 16"><path d="M2.400,4 H13.600 M2.400,8 H13.600 M2.400,12 H13.600" stroke="#d2d2d2" stroke-width="1.500"/></svg>
<div class="a" style="left:837.6px;top:191.8px;width:11.600px;height:9.600px;border:1px solid #d2d2d2;background:linear-gradient(90deg,#e8e8e8,#3a3a3a)"></div>
<svg style="left:835.0px;top:208.3px" width="16" height="16" viewBox="0 0 16 16"><circle cx="6.400" cy="6.400" r="4.400" fill="#d2d2d2"/><circle cx="9.800" cy="9.800" r="4.400" fill="#9a9a9a" fill-opacity="0.85" stroke="#bdbdbd" stroke-width="0.6"/></svg>
<div class="a" style="left:829.4px;top:226.5px;width:26.3px;height:1px;background:#454545;"></div>
<svg style="left:838px;top:228.5px" width="10" height="3" viewBox="0 0 10 3"><path d="M0,1.5 H10" stroke="#626262" stroke-width="1.4" stroke-dasharray="1.3 0.9"/></svg>
<svg style="left:835.0px;top:234.8px" width="16" height="16" viewBox="0 0 16 16"><circle cx="8" cy="8" r="6.200" fill="none" stroke="#9c9c9c" stroke-width="0.9" stroke-dasharray="1 0.9"/><circle cx="8" cy="8" r="4.200" fill="#d2d2d2"/></svg>
<svg style="left:835.0px;top:253.5px" width="16" height="16" viewBox="0 0 16 16"><path d="M4.400,2.600 H13.400 V10 L10.800,12.600 H4.400 Z" fill="none" stroke="#d2d2d2" stroke-width="1"/><path d="M13.400,10 H10.800 V12.600" fill="none" stroke="#d2d2d2" stroke-width="0.900"/><circle cx="4.800" cy="11" r="2.400" fill="#535353" stroke="#d2d2d2" stroke-width="1"/></svg>
<div class="a" style="left:829.4px;top:272.5px;width:26.3px;height:1px;background:#454545;"></div>
<svg style="left:838px;top:274.5px" width="10" height="3" viewBox="0 0 10 3"><path d="M0,1.5 H10" stroke="#626262" stroke-width="1.4" stroke-dasharray="1.3 0.9"/></svg>
<svg style="left:835.0px;top:280.0px" width="16" height="16" viewBox="0 0 16 16"><path d="M8,2 L14,5.800 L8,9.600 L2,5.800 Z" fill="#d2d2d2"/><path d="M3.200,8.800 L8,11.800 L12.800,8.800 L14,9.600 L8,13.400 L2,9.600 Z" fill="#d2d2d2"/></svg>
<svg style="left:835.0px;top:299.0px" width="16" height="16" viewBox="0 0 16 16"><path d="M6.400,3.400 H2.400 V13.600 H12.600 V9.600" fill="none" stroke="#d2d2d2" stroke-width="1.200"/><path d="M6.800,9.200 L13.200,2.800 M9,2.400 H13.600 V7" fill="none" stroke="#d2d2d2" stroke-width="1.300"/></svg>
<svg style="left:835.0px;top:317.6px" width="16" height="16" viewBox="0 0 16 16"><path d="M8.600,5.600 V2.400 H2.400 V9.400 H5.400" fill="none" stroke="#d2d2d2" stroke-width="1.100"/><rect x="5.600" y="5.800" width="8" height="7.800" fill="none" stroke="#d2d2d2" stroke-width="1.100"/></svg>
<div class="a" style="left:829.4px;top:338.5px;width:26.3px;height:1px;background:#454545;"></div>

<span class="t" style="left:863.30px;top:56.89px;font-size:7px;color:#f0f0f0;transform:scaleX(0.8616);font-weight:bold;">Propiedades</span>
<span class="t" style="left:913.30px;top:56.89px;font-size:7px;color:#a4a4a4;transform:scaleX(0.8489);font-weight:bold;">Bibliotecas</span>
<span class="t" style="left:863.30px;top:77.23px;font-size:7.5px;color:#e0e0e0;transform:scaleX(0.8667);">No hay selección</span>
<div class="a" style="left:859px;top:91.5px;width:157px;height:1px;background:#595959;"></div>
<span class="t" style="left:863.30px;top:100.93px;font-size:7.5px;color:#dcdcdc;transform:scaleX(0.8704);">Transform</span>
<svg style="left:863px;top:121px" width="14" height="14" viewBox="0 0 14 14"><path d="M2.200,2.200 H11.800 V11.800 H2.200Z M2.200,7 H11.800 M7,2.200 V11.800" fill="none" stroke="#9a9a9a" stroke-width="0.600"/><rect x="0.6" y="0.6" width="3.200" height="3.200" fill="#535353" stroke="#d2d2d2" stroke-width="0.800"/><rect x="0.6" y="5.4" width="3.200" height="3.200" fill="#535353" stroke="#d2d2d2" stroke-width="0.800"/><rect x="0.6" y="10.2" width="3.200" height="3.200" fill="#535353" stroke="#d2d2d2" stroke-width="0.800"/><rect x="5.4" y="0.6" width="3.200" height="3.200" fill="#535353" stroke="#d2d2d2" stroke-width="0.800"/><rect x="5.4" y="5.4" width="3.200" height="3.200" fill="#f2f2f2"/><rect x="5.4" y="10.2" width="3.200" height="3.200" fill="#535353" stroke="#d2d2d2" stroke-width="0.800"/><rect x="10.2" y="0.6" width="3.200" height="3.200" fill="#535353" stroke="#d2d2d2" stroke-width="0.800"/><rect x="10.2" y="5.4" width="3.200" height="3.200" fill="#535353" stroke="#d2d2d2" stroke-width="0.800"/><rect x="10.2" y="10.2" width="3.200" height="3.200" fill="#535353" stroke="#d2d2d2" stroke-width="0.800"/></svg>
<span class="t" style="left:883.00px;top:116.23px;font-size:7.5px;color:#e0e0e0;transform:scaleX(0.8467);">X:</span>
<div class="a" style="left:892.5px;top:113px;width:37px;height:13px;background:#5b5b5b;"></div>
<span class="t" style="left:895.50px;top:116.23px;font-size:7.5px;color:#7c7c7c;transform:scaleX(0.8533);">0 mm</span>
<span class="t" style="left:883.00px;top:133.22px;font-size:7.5px;color:#e0e0e0;transform:scaleX(0.8993);">Y:</span>
<div class="a" style="left:892.5px;top:130px;width:37px;height:13px;background:#5b5b5b;"></div>
<span class="t" style="left:895.50px;top:133.22px;font-size:7.5px;color:#7c7c7c;transform:scaleX(0.8533);">0 mm</span>
<span class="t" style="left:940.00px;top:116.23px;font-size:7.5px;color:#e0e0e0;transform:scaleX(0.8640);">W:</span>
<div class="a" style="left:951.5px;top:113px;width:38.5px;height:13px;background:#5b5b5b;"></div>
<span class="t" style="left:954.50px;top:116.23px;font-size:7.5px;color:#7c7c7c;transform:scaleX(0.8533);">0 mm</span>
<span class="t" style="left:940.50px;top:133.22px;font-size:7.5px;color:#e0e0e0;transform:scaleX(0.9333);">H:</span>
<div class="a" style="left:951.5px;top:130px;width:38.5px;height:13px;background:#5b5b5b;"></div>
<span class="t" style="left:954.50px;top:133.22px;font-size:7.5px;color:#7c7c7c;transform:scaleX(0.8533);">0 mm</span>
<svg style="left:999px;top:122px" width="11" height="14" viewBox="0 0 11 14"><rect x="3.400" y="1.400" width="4.200" height="5.400" rx="2" fill="none" stroke="#d2d2d2" stroke-width="1.100"/><rect x="3.400" y="7.600" width="4.200" height="5.400" rx="2" fill="none" stroke="#d2d2d2" stroke-width="1.100"/><path d="M0.800,1 L10.200,13" stroke="#535353" stroke-width="2.600"/><path d="M1,1.200 L10,12.800" stroke="#d2d2d2" stroke-width="1"/></svg>
<svg style="left:880px;top:148.500px" width="9" height="8" viewBox="0 0 9 8"><path d="M7.600,0.800 L0.800,7 H8.400" fill="none" stroke="#d2d2d2" stroke-width="0.900"/><path d="M4.200,3.800 A4,4 0 0 1 5.600,7" fill="none" stroke="#d2d2d2" stroke-width="0.800"/></svg>
<span class="t" style="left:889.00px;top:150.03px;font-size:7.5px;color:#d8d8d8;transform:scaleX(0.6239);">:</span>
<div class="a" style="left:891.5px;top:147.5px;width:36.5px;height:12.5px;background:#5b5b5b;"></div>
<span class="t" style="left:894.50px;top:149.62px;font-size:7.5px;color:#7c7c7c;transform:scaleX(0.9065);">0°</span>
<svg style="left:919px;top:152px" width="6" height="4" viewBox="0 0 6 4"><path d="M0.6,0.6 L3,3 L5.4,0.6" fill="none" stroke="#7c7c7c" stroke-width="1.1"/></svg>
<svg style="left:956.6px;top:150.800px" width="9.4" height="8.5" viewBox="0 0 11 10"><path d="M0.600,1.400 V8.600 L4.200,5 Z" fill="none" stroke="#d2d2d2" stroke-width="0.900"/><path d="M10.400,1.400 V8.600 L6.800,5 Z" fill="#d2d2d2"/><path d="M5.500,0 V10" stroke="#d2d2d2" stroke-width="0.900"/></svg>
<svg style="left:973px;top:150.300px" width="8.5" height="9.4" viewBox="0 0 10 11"><path d="M1.400,0.600 H8.600 L5,4.200 Z" fill="none" stroke="#d2d2d2" stroke-width="0.900"/><path d="M1.400,10.400 H8.600 L5,6.800 Z" fill="#d2d2d2"/><path d="M0,5.500 H10" stroke="#d2d2d2" stroke-width="0.900"/></svg>
<div class="a" style="left:1001.2px;top:167.4px;width:2.500px;height:2.500px;border-radius:50%;background:#d6d6d6"></div>
<div class="a" style="left:1004.6px;top:167.4px;width:2.500px;height:2.500px;border-radius:50%;background:#d6d6d6"></div>
<div class="a" style="left:1008.0px;top:167.4px;width:2.500px;height:2.500px;border-radius:50%;background:#d6d6d6"></div>
<div class="a" style="left:1020px;top:69px;width:1px;height:480px;background:#595959;"></div>
<div class="a" style="left:859px;top:175.5px;width:157px;height:1px;background:#595959;"></div>
<span class="t" style="left:863.30px;top:183.62px;font-size:7.5px;color:#dcdcdc;transform:scaleX(0.8579);">Appearance</span>
<div class="a" style="left:864.200px;top:200.600px;width:10.600px;height:10.800px;background:#050505;border:1px solid #c8c8c8"></div>
<span class="t" style="left:883.30px;top:203.22px;font-size:7.5px;color:#e0e0e0;transform:scaleX(0.7828);">Fill</span>
<div class="a" style="left:864.200px;top:220px;width:10.600px;height:10.800px;background:#050505;border:1px solid #c8c8c8"></div>
<div class="a" style="left:867.400px;top:223.300px;width:4.200px;height:4.200px;background:#6e6e6e;border:0.8px solid #e0e0e0"></div>
<span class="t" style="left:883.30px;top:221.83px;font-size:7.5px;color:#e6e6e6;transform:scaleX(0.8904);border-bottom:1px dotted #a0a0a0;padding-bottom:0.500px;">Stroke</span>
<div class="a" style="left:916px;top:218.8px;width:11px;height:13.2px;background:#4a4a4a;"></div>
<svg style="left:918.500px;top:220.500px" width="6" height="10" viewBox="0 0 6 10"><path d="M0.600,3.200 L3,0.800 L5.400,3.200 M0.600,6.800 L3,9.200 L5.400,6.800" fill="none" stroke="#d6d6d6" stroke-width="1.100"/></svg>
<div class="a" style="left:928px;top:218.8px;width:20.5px;height:13.2px;background:#454545;"></div>
<span class="t" style="left:930.50px;top:221.83px;font-size:7.5px;color:#e4e4e4;transform:scaleX(0.8793);">1 pt</span>
<div class="a" style="left:949.8px;top:218.8px;width:10.6px;height:13.2px;background:#4a4a4a;"></div>
<svg style="left:952.2px;top:223.6px" width="6" height="4" viewBox="0 0 6 4"><path d="M0.6,0.6 L3,3 L5.4,0.6" fill="none" stroke="#d6d6d6" stroke-width="1.1"/></svg>
<div class="a" style="left:864.200px;top:239px;width:10.600px;height:10.800px;border:1px solid #9a9a9a;background:conic-gradient(#6a6a6a 25%,#7a7a7a 0 50%,#6a6a6a 0 75%,#7a7a7a 0) 0 0/4.400px 4.400px"></div>
<span class="t" style="left:883.30px;top:240.62px;font-size:7.5px;color:#e6e6e6;transform:scaleX(0.8849);border-bottom:1px dotted #a0a0a0;padding-bottom:0.500px;">Opacity</span>
<div class="a" style="left:916px;top:238px;width:32.5px;height:12.8px;background:#454545;"></div>
<span class="t" style="left:918.50px;top:240.62px;font-size:7.5px;color:#e4e4e4;transform:scaleX(0.8862);">100%</span>
<div class="a" style="left:949.8px;top:238px;width:10.6px;height:12.8px;background:#4a4a4a;"></div>
<svg style="left:953.4px;top:241.4px" width="4" height="6" viewBox="0 0 4 6"><path d="M0.6,0.6 L3,3 L0.6,5.4" fill="none" stroke="#d6d6d6" stroke-width="1.1"/></svg>
<span class="t" style="left:867.60px;top:263.63px;font-size:9px;color:#d8d8d8;transform:scaleX(1.0285);font-style:italic;">fx</span>
<span class="t" style="left:875.40px;top:263.63px;font-size:9px;color:#d8d8d8;transform:scaleX(0.6398);">.</span>
<div class="a" style="left:1001.2px;top:282.2px;width:2.500px;height:2.500px;border-radius:50%;background:#d6d6d6"></div>
<div class="a" style="left:1004.6px;top:282.2px;width:2.500px;height:2.500px;border-radius:50%;background:#d6d6d6"></div>
<div class="a" style="left:1008.0px;top:282.2px;width:2.500px;height:2.500px;border-radius:50%;background:#d6d6d6"></div>
<div class="a" style="left:1020px;top:69px;width:1px;height:480px;background:#595959;"></div>
<div class="a" style="left:859px;top:289.5px;width:157px;height:1px;background:#595959;"></div>
<span class="t" style="left:863.30px;top:301.42px;font-size:7.5px;color:#dcdcdc;transform:scaleX(0.8650);">Quick Actions</span>
<div class="a" style="left:1020px;top:69px;width:1px;height:480px;background:#595959;"></div>

<div class="a" id="taskbar"></div>
<svg style="left:10.5px;top:557px" width="11" height="11" viewBox="0 0 11 11"><g fill="#fff"><path d="M0,1.5 L4.6,0.9 V5.1 H0Z"/><path d="M5.4,0.8 L11,0 V5.1 H5.4Z"/><path d="M0,5.9 H4.6 V10.1 L0,9.5Z"/><path d="M5.4,5.9 H11 V11 L5.4,10.2Z"/></g></svg>
<div class="a" style="left:32px;top:549.5px;width:229.5px;height:26.5px;background:#f1f1f1;"></div>
<svg style="left:40px;top:557px" width="12" height="12" viewBox="0 0 12 12"><circle cx="7" cy="4.6" r="3.4" fill="none" stroke="#222" stroke-width="1.1"/><path d="M4.6,7.2 L0.8,11" stroke="#222" stroke-width="1.2"/></svg>
<span class="t" style="left:58.60px;top:557.23px;font-size:10.5px;color:#2a2a2a;transform:scaleX(0.9423);">Escribe aquí para buscar</span>
<div class="a" style="left:272.3px;top:557.5px;width:10px;height:10px;border-radius:50%;border:1.9px solid #f4f4f4"></div>
<svg style="left:303px;top:557px" width="13" height="11" viewBox="0 0 13 11"><g fill="none" stroke="#f0f0f0" stroke-width="1"><path d="M1.7,0.4 V10.4 M6.8,0.4 V10.4 M1.7,3.4 H6.8 M1.7,7.6 H6.8"/><path d="M11,0.4 V2.6 M11,4.4 V6.6 M11,8.2 V10.4"/></g></svg>
<svg style="left:336.7px;top:553.8px" width="14.3" height="16.4" viewBox="0 0 13 14"><path d="M6.5,0.2 L9.6,0.2 L10.6,1.4 L12,1.6 L11.6,3 L12.6,5 L10.8,10.4 L6.5,13.8 L2.2,10.4 L0.4,5 L1.4,3 L1,1.6 L2.4,1.4 L3.4,0.2Z" fill="#f4582a"/><path d="M6.5,3 L8.8,2.7 L10.4,4.6 L9.2,7 L7.6,8.6 L6.5,11.2 L5.4,8.6 L3.8,7 L2.6,4.6 L4.2,2.7Z" fill="#fff"/><path d="M6.5,4.6 L7.8,5 L6.5,7.6 L5.2,5Z" fill="#f4582a"/></svg>
<svg style="left:368.8px;top:556px" width="15" height="12.5" viewBox="0 0 14 12"><path d="M0,0.6 H5 L6,2 H14 V11.4 H0Z" fill="#f5c24a"/><path d="M0,3.6 H14 V11.4 H0Z" fill="#fbd973"/><rect x="3.4" y="7" width="7.2" height="4.4" fill="#3f9bd8"/><rect x="5" y="8.6" width="4" height="2.8" fill="#fbe9a6"/></svg>
<svg style="left:401.2px;top:554.6px" width="15.8" height="15" viewBox="0 0 14 13"><rect x="3.4" y="0.4" width="10.4" height="12.2" rx="0.8" fill="#2b7cd3"/><rect x="3.4" y="0.4" width="10.4" height="3.1" fill="#41a5ee"/><rect x="3.4" y="9.5" width="10.4" height="3.1" fill="#103f91"/><rect x="0" y="3" width="7.6" height="7.2" rx="0.7" fill="#185abd"/></svg>
<span class="t" style="left:1.00px;top:3.10px;font-size:6.6px;color:#fff;transform:scaleX(0.9952);font-weight:bold;left:402.5px;top:558.8px;">W</span>
<svg style="left:434.4px;top:554.8px" width="17" height="15" viewBox="0 0 17 15"><path d="M0,5.4 L8.5,0 L17,5.4 V7 H0Z" fill="#0f64b2"/><rect x="0" y="5.4" width="17" height="9.4" fill="#1c86d8"/><path d="M1.6,4.400 H15.4 V9 L8.5,12.4 L1.6,9Z" fill="#e6f2fb"/><path d="M0,5.800 L8.5,11.4 L17,5.800 V14.800 H0Z" fill="#38a8f0"/><path d="M0,14.800 L8.5,9.600 L17,14.800Z" fill="#1f8fe0"/></svg>
<svg style="left:467.7px;top:553.8px" width="16.6" height="16.6" viewBox="0 0 13 13"><circle cx="6.5" cy="6.5" r="6.5" fill="#1ed760"/><g fill="none" stroke="#1a1a1a" stroke-linecap="round"><path d="M3,4.6 Q6.6,3.5 10.2,5.2" stroke-width="1.4"/><path d="M3.4,6.8 Q6.5,5.9 9.6,7.4" stroke-width="1.2"/><path d="M3.8,8.8 Q6.4,8.1 8.9,9.3" stroke-width="1"/></g></svg>
<svg style="left:500px;top:554.6px" width="17.3" height="16.2" viewBox="0 0 16 15"><circle cx="12" cy="3.2" r="1.9" fill="#5b63c9"/><circle cx="7.6" cy="2.6" r="2.5" fill="#7b83eb"/><rect x="9.2" y="5.4" width="5.4" height="5.6" rx="1.4" fill="#5059c9"/><rect x="3.6" y="5.2" width="8" height="7.4" rx="1.6" fill="#7b83eb"/><rect x="0" y="3.6" width="7.4" height="7.2" rx="0.8" fill="#4b53bc"/><circle cx="12.2" cy="11.6" r="2.9" fill="#d8202f"/></svg>
<span class="t" style="left:1.00px;top:2.50px;font-size:6.6px;color:#fff;transform:scaleX(0.9922);font-weight:bold;left:502px;top:559.2px;">T</span>
<svg style="left:534.4px;top:555px" width="15.4" height="15" viewBox="0 0 14 12" preserveAspectRatio="none"><rect width="14" height="12" rx="0.8" fill="#1664b4"/><rect width="14" height="7" rx="0.8" fill="#2f8be0"/><path d="M0,11 L5,5 L8.4,9 L10.4,7 L14,11 V12 H0Z" fill="#8cc8f6"/><path d="M0,11.4 L5,5.4 L9.6,12 H0Z" fill="#5fb0ee"/><circle cx="10.6" cy="3.2" r="1.2" fill="#d9eefc"/></svg>
<div class="a" style="left:559.4px;top:549.5px;width:32px;height:26.5px;background:#5a5a5a;"></div>
<div class="a" style="left:567.7px;top:555.2px;width:14.3px;height:13.7px;background:#330a00;border-radius:2px"></div>
<span class="t" style="left:570.20px;top:557.83px;font-size:9px;color:#ff9a1a;transform:scaleX(1.0444);font-weight:bold;">Ai</span>
<div class="a" style="left:331px;top:574px;width:26.5px;height:2px;background:#86b6e4;"></div>
<div class="a" style="left:363px;top:574px;width:26.5px;height:2px;background:#86b6e4;"></div>
<div class="a" style="left:462.5px;top:574px;width:26.5px;height:2px;background:#86b6e4;"></div>
<div class="a" style="left:495.5px;top:574px;width:26.5px;height:2px;background:#86b6e4;"></div>
<div class="a" style="left:528px;top:574px;width:27px;height:2px;background:#86b6e4;"></div>
<div class="a" style="left:559.4px;top:574px;width:32px;height:2px;background:#9cc4ea;"></div>
<svg style="left:826px;top:559.5px" width="8" height="5" viewBox="0 0 8 5"><path d="M0.6,4.4 L4,1 L7.4,4.4" fill="none" stroke="#f0f0f0" stroke-width="1"/></svg>
<svg style="left:841px;top:558.5px" width="11" height="7" viewBox="0 0 11 7"><path d="M2.6,7 A2.4,2.4 0 0 1 2.4,2.4 A3,3 0 0 1 7.8,1.6 A2.7,2.7 0 0 1 8.6,7Z" fill="#f0f0f0"/></svg>
<svg style="left:858.5px;top:556.5px" width="6" height="12" viewBox="0 0 6 12"><rect x="1" y="0" width="4" height="7" rx="0.8" fill="#e8e8e8"/><rect x="0.4" y="6.6" width="5.2" height="2.2" fill="#cfcfcf"/><rect x="2.2" y="8.8" width="1.6" height="2.4" fill="#cfcfcf"/></svg>
<svg style="left:872px;top:558.5px" width="12" height="7" viewBox="0 0 12 7"><rect x="1.6" y="0.8" width="9.6" height="5.2" fill="#e6e6e6"/><rect x="0" y="2.2" width="1.6" height="2.4" fill="#e6e6e6"/></svg>
<svg style="left:889.5px;top:557.5px" width="10" height="9" viewBox="0 0 10 9"><g fill="none" stroke="#bdbdbd" stroke-width="0.9"><path d="M0.6,8.6 A8,8 0 0 1 8.6,0.6" /><path d="M3.2,8.6 A5.4,5.4 0 0 1 8.6,3.2"/><path d="M5.8,8.6 A2.8,2.8 0 0 1 8.6,5.8"/></g><circle cx="8.2" cy="8.2" r="0.9" fill="#e0e0e0"/></svg>
<svg style="left:904px;top:557.5px" width="12" height="9" viewBox="0 0 12 9"><path d="M0.4,3 H2.2 L4.6,0.8 V8.2 L2.2,6 H0.4Z" fill="none" stroke="#e8e8e8" stroke-width="0.9"/><path d="M6.2,2.8 Q7.4,4.5 6.2,6.2 M7.8,1.6 Q9.8,4.5 7.8,7.4 M9.4,0.6 Q12,4.5 9.4,8.4" fill="none" stroke="#d8d8d8" stroke-width="0.8"/></svg>
<svg style="left:923px;top:556.5px" width="11" height="11" viewBox="0 0 11 11"><g fill="none" stroke="#e4e4e4" stroke-width="1"><rect x="-1.6" y="-2.9" width="3.2" height="5.8" rx="1.6" transform="translate(7.6,3.4) rotate(40)"/><rect x="-1.6" y="-2.9" width="3.2" height="5.8" rx="1.6" transform="translate(3.6,7.6) rotate(40)"/><path d="M4.6,6.6 L6.6,4.400"/></g></svg>
<span class="t" style="left:955.60px;top:552.40px;font-size:9px;color:#f4f4f4;transform:scaleX(0.7814);">12:24</span>
<span class="t" style="left:944.50px;top:564.70px;font-size:9px;color:#f4f4f4;transform:scaleX(0.8836);">07/01/2021</span>
<svg style="left:995.5px;top:557px" width="11" height="11" viewBox="0 0 11 11"><path d="M0.6,0.6 H10.4 V7.6 L8,10 H0.6Z M10.4,7.6 H8 V10" fill="none" stroke="#f0f0f0" stroke-width="0.9"/></svg>
<div class="a" style="left:1020.5px;top:549.5px;width:1px;height:26.5px;background:#6a6a6a;"></div>

</div></body>
</html>
